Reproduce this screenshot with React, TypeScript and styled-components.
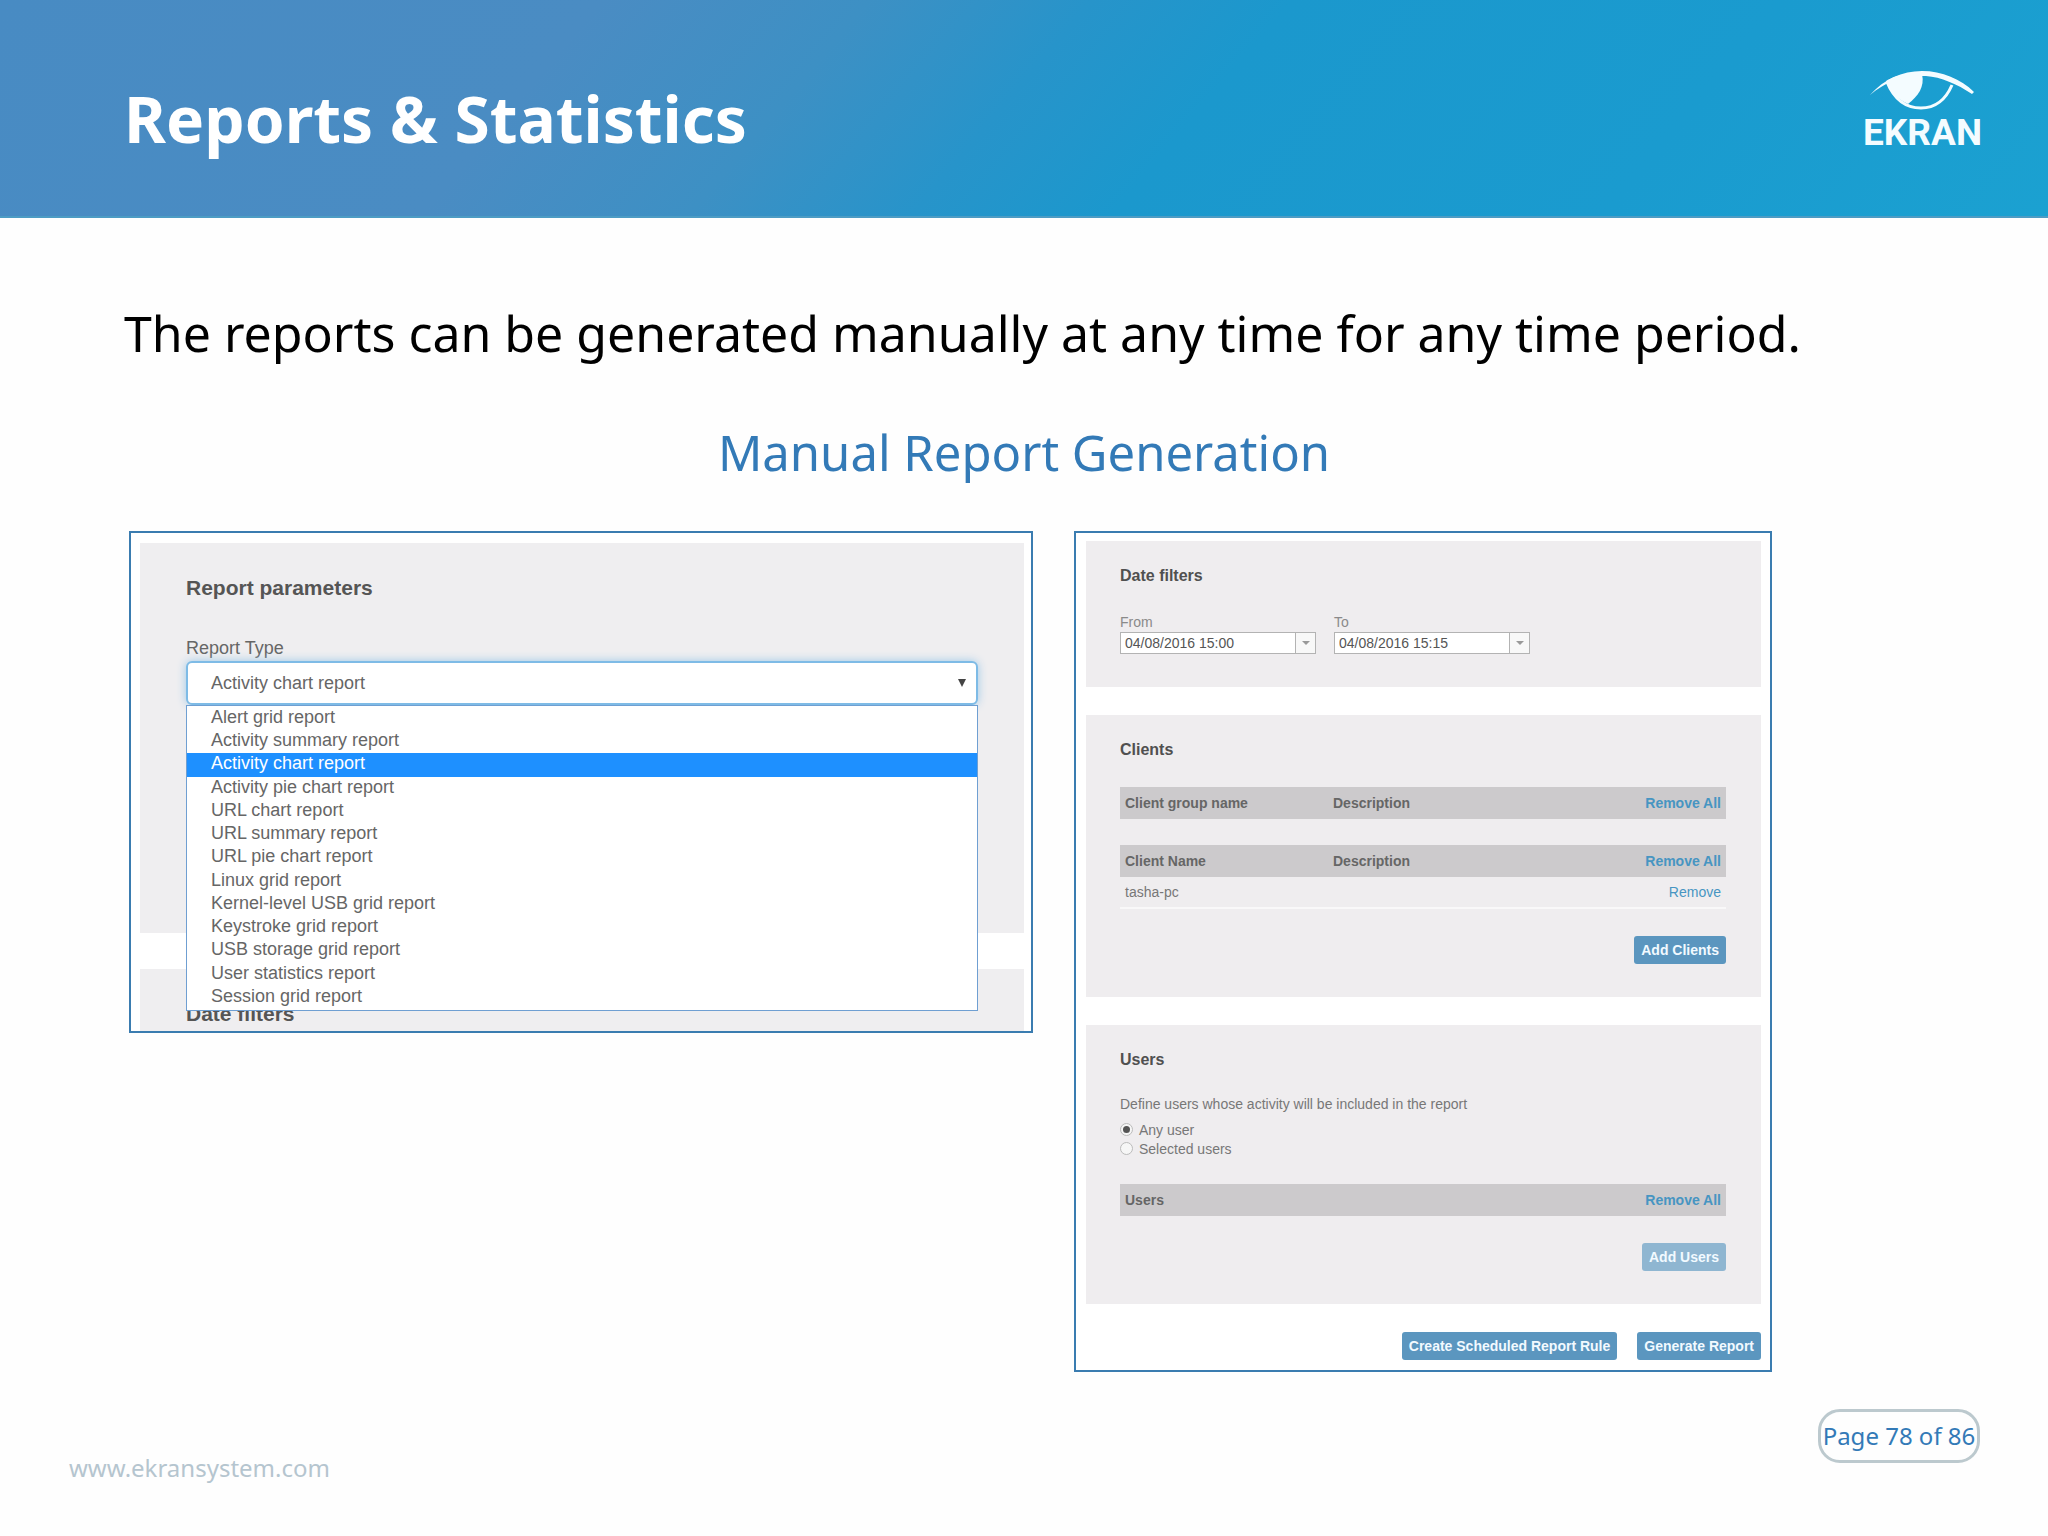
import React, { useState } from "react";
import styled, { createGlobalStyle } from "styled-components";

const GlobalStyle = createGlobalStyle`
  *, *::before, *::after { box-sizing: border-box; }
  body { margin: 0; background: #fefefe; }
`;

const uiFont = `"Liberation Sans", Arial, sans-serif`;
const slideFont = `"Noto Sans", "Open Sans", sans-serif`;

const Slide = styled.div`
  min-height: 100vh;
  display: flex;
  flex-direction: column;
  font-family: ${slideFont};
`;

const Header = styled.header`
  height: 218px;
  padding: 0 66px 0 124px;
  display: flex;
  justify-content: space-between;
  border-bottom: 2px solid #4d9cc4;
  background: linear-gradient(130deg, #488bc3 0%, #4a8cc3 27%, #3d90c4 39%, #2794ca 49%, #1b98cd 58%, #1a9bcf 80%, #1ba1d1 100%);
`;

const Title = styled.h1`
  margin: 0;
  padding-top: 75px;
  font-size: 64px;
  line-height: 88px;
  font-weight: 700;
  color: #fff;
`;

const Logo = styled.div`
  padding-top: 70px;
  display: flex;
  flex-direction: column;
  align-items: center;
  color: #f4fcff;
`;

const LogoText = styled.span`
  font-family: Roboto, ${uiFont};
  font-size: 37px;
  line-height: 42px;
  font-weight: 700;
`;

const Main = styled.main`
  flex: 1;
  display: flex;
  flex-direction: column;
`;

const Lead = styled.p`
  margin: 0;
  padding: 81px 124px 0;
  font-size: 50px;
  line-height: 68px;
  color: #000;
`;

const Subtitle = styled.h2`
  margin: 0;
  padding-top: 51px;
  font-size: 49px;
  line-height: 68px;
  font-weight: 400;
  text-align: center;
  color: #337ab7;
`;

const Shots = styled.div`
  padding: 45px 276px 0 129px;
  display: grid;
  grid-template-columns: minmax(0, 904fr) minmax(0, 698fr);
  gap: 41px;
  align-items: start;
`;

const Shot = styled.section`
  border: 2px solid #3a7cb0;
  background: #fff;
  font-family: ${uiFont};
  color: #666;
`;

const ParamsShot = styled(Shot)`
  height: 502px;
  padding: 10px 7px 0 9px;
  overflow: hidden;
  font-size: 18px;
  line-height: 22px;
`;

const ParamsPanel = styled.div<{ $tall?: boolean }>`
  height: ${(p) => (p.$tall ? 390 : 80)}px;
  margin-bottom: 36px;
  padding: 33px 46px 0;
  background: #efeef0;
`;

const ParamsHeading = styled.h3`
  margin: 0;
  font-size: 21px;
  line-height: 24px;
  color: #555;
`;

const ParamsLabel = styled.label`
  display: block;
  padding: 37px 0 2px;
`;

const Picker = styled.div`
  position: relative;
`;

const TypeSelect = styled.select`
  display: block;
  width: 100%;
  height: 44px;
  padding: 0 23px;
  border: 2px solid #7ebbe6;
  border-radius: 6px;
  box-shadow: 0 0 10px #9cc8e8;
  appearance: none;
  background: #fff;
  font-family: inherit;
  font-size: 18px;
  color: #666;
`;

const Caret = styled.svg`
  position: absolute;
  right: 12px;
  top: 18px;
`;

const OptionList = styled.ul`
  position: absolute;
  top: 100%;
  left: 0;
  right: 0;
  z-index: 1;
  height: 306px;
  margin: 0;
  padding: 1px 0;
  border: 1px solid #6f9fd2;
  display: grid;
  grid-auto-rows: 1fr;
  list-style: none;
  background: #fff;
`;

const Option = styled.li<{ $active: boolean }>`
  padding-left: 24px;
  line-height: 21px;
  background: ${(p) => (p.$active ? "#1e90ff" : "transparent")};
  color: ${(p) => (p.$active ? "#fff" : "inherit")};
  cursor: pointer;
`;

const FormShot = styled(Shot)`
  padding: 8px 9px 10px 10px;
  font-size: 14px;
  line-height: 16px;
`;

const Panel = styled.div`
  margin-bottom: 28px;
  padding: 25px 35px 33px 34px;
  background: #efedef;
`;

const PanelHeading = styled.h3`
  margin: 0;
  padding-bottom: 1px;
  font-size: 16px;
  line-height: 20px;
  color: #505050;
`;

const Dates = styled.div`
  display: flex;
  gap: 18px;
  padding-top: 27px;
`;

const DateField = styled.div`
  display: flex;
  flex-direction: column;
  gap: 2px;
  color: #8a8a8a;
`;

const DateBox = styled.div`
  display: flex;
  width: 196px;
  height: 22px;
  border: 1px solid #b3b3b3;
  background: #fff;
`;

const DateInput = styled.input`
  flex: 1;
  min-width: 0;
  padding: 0 4px;
  border: 0;
  background: none;
  font-family: inherit;
  font-size: 14px;
  color: #555;
`;

const DateButton = styled.button`
  width: 20px;
  padding: 0;
  border: 0;
  border-left: 1px solid #b3b3b3;
  display: grid;
  place-items: center;
  background: #f8f8f8;
`;

const Table = styled.table`
  width: 100%;
  table-layout: fixed;
  border-collapse: collapse;
  margin-top: 26px;
`;

const HeadCell = styled.th<{ $wide?: boolean }>`
  width: ${(p) => (p.$wide ? "213px" : "auto")};
  height: 32px;
  padding: 0 5px;
  text-align: left;
  background: #cccacc;
  color: #666;
  &:last-child { text-align: right; }
  &:nth-child(2):not(:last-child) { padding-left: 0; }
`;

const Cell = styled.td`
  height: 31px;
  padding: 0 5px;
  border-bottom: 2px solid #f9f8f9;
  color: #777;
  &:last-child { text-align: right; }
`;

const Action = styled.a`
  color: #4795c2;
  text-decoration: none;
`;

const Actions = styled.div<{ $gap: number }>`
  display: flex;
  justify-content: flex-end;
  gap: 20px;
  padding-top: ${(p) => p.$gap}px;
`;

const Button = styled.button`
  height: 28px;
  padding: 0 7px;
  border: 0;
  border-radius: 3px;
  background: #5b96bf;
  font-family: inherit;
  font-size: 14px;
  font-weight: 700;
  color: #f2faff;
  &:disabled { background: #8fb6d1; }
`;

const Hint = styled.p`
  margin: 0;
  padding: 25px 0 8px;
  color: #777;
`;

const Choice = styled.label`
  display: flex;
  align-items: center;
  gap: 6px;
  height: 19px;
  color: #777;
`;

const Radio = styled.input`
  width: 13px;
  height: 13px;
  margin: 0;
  border: 1px solid #bbb;
  border-radius: 50%;
  appearance: none;
  display: grid;
  place-items: center;
  background: #f6f6f6;
  &:checked::before {
    content: "";
    width: 7px;
    height: 7px;
    border-radius: 50%;
    background: #555;
  }
`;

const Footer = styled.footer`
  display: flex;
  justify-content: space-between;
  align-items: flex-start;
  padding: 37px 68px 51px 69px;
`;

const Site = styled.a`
  padding-top: 42px;
  font-size: 24px;
  line-height: 34px;
  color: #b5c5cf;
  text-decoration: none;
`;

const PageBadge = styled.div`
  width: 162px;
  height: 54px;
  border: 3px solid #bcc9ce;
  border-radius: 22px;
  display: grid;
  place-items: center;
  font-size: 24px;
  line-height: 34px;
  white-space: nowrap;
  color: #337ab7;
`;

const reportTypes = [
  "Alert grid report",
  "Activity summary report",
  "Activity chart report",
  "Activity pie chart report",
  "URL chart report",
  "URL summary report",
  "URL pie chart report",
  "Linux grid report",
  "Kernel-level USB grid report",
  "Keystroke grid report",
  "USB storage grid report",
  "User statistics report",
  "Session grid report",
];

function DateFilter({ id, label, value }: { id: string; label: string; value: string }) {
  return (
    <DateField>
      <label htmlFor={id}>{label}</label>
      <DateBox>
        <DateInput id={id} type="text" defaultValue={value} />
        <DateButton type="button" aria-label={`Pick ${label} date`}>
          <svg width="8" height="5" viewBox="0 0 8 5" fill="#999">
            <path d="M0 0h8L4 4z" />
          </svg>
        </DateButton>
      </DateBox>
    </DateField>
  );
}

export default function App() {
  const [type, setType] = useState("Activity chart report");
  const [scope, setScope] = useState("any");

  return (
    <Slide>
      <GlobalStyle />
      <Header>
        <Title>Reports &amp; Statistics</Title>
        <Logo>
          <svg width="106" height="42" viewBox="0 0 106 42" fill="none" aria-hidden="true">
            <path d="M1 25C15 9 33 1 53 1s39 8 52 21l-2 2C88 14 72 7 57 6 35 5 17 11 1 25z" fill="currentColor" />
            <path d="M17 11C27 5 39 3 53 4c3 13-4 22-14 30C28 29 21 21 17 11z" fill="currentColor" />
            <path d="M18 12c7 17 19 26 34 26 16 0 25-9 31-23" stroke="currentColor" strokeWidth="3" />
          </svg>
          <LogoText>EKRAN</LogoText>
        </Logo>
      </Header>

      <Main>
        <Lead>The reports can be generated manually at any time for any time period.</Lead>
        <Subtitle>Manual Report Generation</Subtitle>

        <Shots>
          <ParamsShot>
            <ParamsPanel $tall>
              <ParamsHeading>Report parameters</ParamsHeading>
              <ParamsLabel htmlFor="report-type">Report Type</ParamsLabel>
              <Picker>
                <TypeSelect id="report-type" value={type} onChange={(e) => setType(e.target.value)}>
                  {reportTypes.map((t) => (
                    <option key={t}>{t}</option>
                  ))}
                </TypeSelect>
                <Caret width="8" height="8" viewBox="0 0 8 8" fill="#444" aria-hidden="true">
                  <path d="M0 0h8L4 8z" />
                </Caret>
                <OptionList role="listbox" aria-label="Report Type">
                  {reportTypes.map((t) => (
                    <Option key={t} role="option" aria-selected={t === type} $active={t === type} onClick={() => setType(t)}>
                      {t}
                    </Option>
                  ))}
                </OptionList>
              </Picker>
            </ParamsPanel>
            <ParamsPanel>
              <ParamsHeading>Date filters</ParamsHeading>
            </ParamsPanel>
          </ParamsShot>

          <FormShot>
            <Panel>
              <PanelHeading>Date filters</PanelHeading>
              <Dates>
                <DateFilter id="from" label="From" value="04/08/2016 15:00" />
                <DateFilter id="to" label="To" value="04/08/2016 15:15" />
              </Dates>
            </Panel>

            <Panel>
              <PanelHeading>Clients</PanelHeading>
              <Table>
                <thead>
                  <tr>
                    <HeadCell $wide>Client group name</HeadCell>
                    <HeadCell>Description</HeadCell>
                    <HeadCell><Action href="#">Remove All</Action></HeadCell>
                  </tr>
                </thead>
              </Table>
              <Table>
                <thead>
                  <tr>
                    <HeadCell $wide>Client Name</HeadCell>
                    <HeadCell>Description</HeadCell>
                    <HeadCell><Action href="#">Remove All</Action></HeadCell>
                  </tr>
                </thead>
                <tbody>
                  <tr>
                    <Cell>tasha-pc</Cell>
                    <Cell />
                    <Cell><Action href="#">Remove</Action></Cell>
                  </tr>
                </tbody>
              </Table>
              <Actions $gap={27}>
                <Button type="button">Add Clients</Button>
              </Actions>
            </Panel>

            <Panel>
              <PanelHeading>Users</PanelHeading>
              <Hint>Define users whose activity will be included in the report</Hint>
              <Choice>
                <Radio type="radio" name="scope" checked={scope === "any"} onChange={() => setScope("any")} />
                Any user
              </Choice>
              <Choice>
                <Radio type="radio" name="scope" checked={scope === "selected"} onChange={() => setScope("selected")} />
                Selected users
              </Choice>
              <Table>
                <thead>
                  <tr>
                    <HeadCell $wide>Users</HeadCell>
                    <HeadCell><Action href="#">Remove All</Action></HeadCell>
                  </tr>
                </thead>
              </Table>
              <Actions $gap={27}>
                <Button type="button" disabled={scope === "any"}>Add Users</Button>
              </Actions>
            </Panel>

            <Actions $gap={0}>
              <Button type="button">Create Scheduled Report Rule</Button>
              <Button type="button">Generate Report</Button>
            </Actions>
          </FormShot>
        </Shots>
      </Main>

      <Footer>
        <Site href="#">www.ekransystem.com</Site>
        <PageBadge>Page 78 of 86</PageBadge>
      </Footer>
    </Slide>
  );
}
